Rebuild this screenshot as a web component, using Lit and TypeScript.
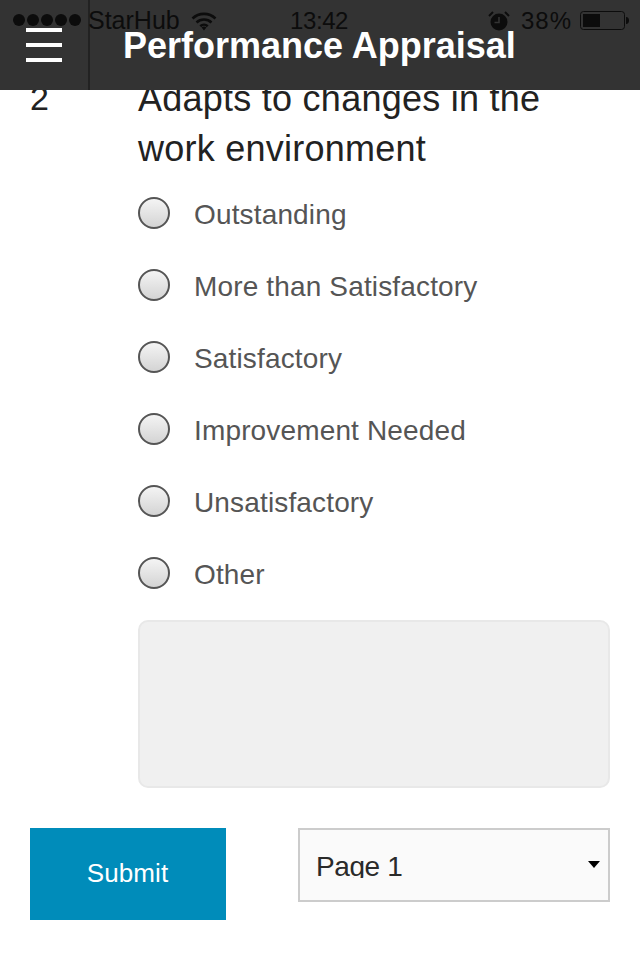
import { LitElement, html, css } from "lit";
import { customElement } from "lit/decorators.js";

const OPTIONS = ["Outstanding", "More than Satisfactory", "Satisfactory", "Improvement Needed", "Unsatisfactory", "Other"];

@customElement("app-root")
export class AppRoot extends LitElement {
  static styles = css`
    :host { display: block; width: 640px; height: 960px; overflow: hidden; position: relative; background: #fff;
      font-family: "Liberation Sans", Arial, sans-serif; color: #222; }
    * { box-sizing: border-box; }
    .status { position: absolute; z-index: 3; top: 0; left: 0; right: 0; height: 41px; display: flex; align-items: center;
      color: #0c0c0c; font-size: 25px; padding: 0 10px 0 13px; }
    .dots { display: flex; gap: 2px; width: 68px; margin-right: 7px; margin-top: -1px; }
    .dots i { width: 12px; height: 12px; border-radius: 50%; background: #0c0c0c; display: block; }
    .wifi { margin-left: 11px; }
    .time { position: absolute; left: 290px; top: 7px; font-size: 24px; line-height: 28px; letter-spacing: -0.4px; }
    .right { margin-left: auto; display: flex; align-items: center; }
    .pct { margin-left: 11px; margin-right: 8px; font-size: 24px; letter-spacing: 1px; }
    .header { position: relative; z-index: 2; height: 90px; background: #333; display: flex; }
    .menu { width: 90px; height: 90px; border-right: 2px solid #222; padding: 28px 0 0 26px; display: flex; flex-direction: column; gap: 11px; flex: none; }
    .menu i { display: block; width: 36px; height: 4px; background: #fff; }
    .title { margin: 25px 0 0 33px; font-size: 36px; line-height: 42px; font-weight: 700; color: #fff; white-space: nowrap; }
    .main { margin-top: -16px; padding: 0 30px; }
    .q { display: flex; font-size: 36px; line-height: 50px; letter-spacing: 0.25px; }
    .num { width: 108px; flex: none; font-size: 34px; margin-top: -1px; }
    .qt { width: 450px; color: #222; }
    .opts { margin: 5px 0 0 108px; }
    .opt { display: flex; align-items: center; height: 72px; font-size: 28px; color: #555; letter-spacing: 0.15px; }
    .radio { width: 32px; height: 32px; border-radius: 50%; border: 2px solid #555; background: linear-gradient(#f4f4f4, #d4d4d4); flex: none; margin-right: 24px; position: relative; top: -2px; }
    .area { margin: 9px 0 0 108px; width: 472px; height: 168px; background: #f0f0f0; border: 2px solid #e8e8e8; border-radius: 10px; }
    .foot { display: flex; justify-content: space-between; align-items: flex-start; margin-top: 40px; }
    .submit { width: 196px; height: 92px; background: #008cba; color: #fff; font-size: 26px; letter-spacing: 0.1px; display: flex; align-items: center; justify-content: center; padding: 0 1px 2px 0; }
    .select { width: 312px; height: 74px; background: #fafafa; border: 2px solid #ccc; display: flex; padding: 0 8px 0 16px; color: #2a2a2a; font-size: 28px; letter-spacing: -0.4px; }
    .select span { flex: 1; height: 28px; line-height: 34px; overflow: hidden; margin-top: 20px; }
    .select svg { margin-top: 31px; }
  `;

  render() {
    return html`
      <div class="status">
        <div class="dots">${[1, 2, 3, 4, 5].map(() => html`<i></i>`)}</div>
        <span>StarHub</span>
        <svg class="wifi" width="26" height="20" viewBox="0 0 26 20"><g fill="none" stroke="#0c0c0c" stroke-width="2.6"><path d="M1.5 7.5a16.5 16.5 0 0 1 23 0"/><path d="M5.5 11.5a11 11 0 0 1 15 0"/><path d="M9.3 15.2a5.4 5.4 0 0 1 7.4 0"/></g><path d="M13 19.5l-2.4-3a3.6 3.6 0 0 1 4.8 0z" fill="#0c0c0c"/></svg>
        <span class="time">13:42</span>
        <div class="right">
          <svg width="22" height="22" viewBox="0 0 22 22"><circle cx="11" cy="12" r="8.500" fill="#0c0c0c"/><path d="M11 7v5.500H6.500" fill="none" stroke="#333" stroke-width="1.600"/><path d="M1 6l4-4M21 6l-4-4" stroke="#0c0c0c" stroke-width="2"/></svg>
          <span class="pct">38%</span>
          <svg width="50" height="20" viewBox="0 0 50 20"><rect x=".5" y=".5" width="44" height="18" rx="3" fill="none" stroke="#0c0c0c" stroke-width="1"/><rect x="3" y="3" width="17" height="13" fill="#0c0c0c"/><path d="M46 6c2 0 3 1.500 3 3.500s-1 3.500-3 3.500z" fill="#0c0c0c"/></svg>
        </div>
      </div>
      <div class="header">
        <div class="menu"><i></i><i></i><i></i></div>
        <div class="title">Performance Appraisal</div>
      </div>
      <div class="main">
        <div class="q"><div class="num">2</div><div class="qt">Adapts to changes in the work environment</div></div>
        <div class="opts">
          ${OPTIONS.map((o) => html`<div class="opt"><span class="radio"></span>${o}</div>`)}
        </div>
        <div class="area"></div>
        <div class="foot">
          <div class="submit">Submit</div>
          <div class="select"><span>Page 1</span>
            <svg width="12" height="7" viewBox="0 0 12 7"><path d="M0 0h12L6 7z" fill="#000"/></svg>
          </div>
        </div>
      </div>
    `;
  }
}
